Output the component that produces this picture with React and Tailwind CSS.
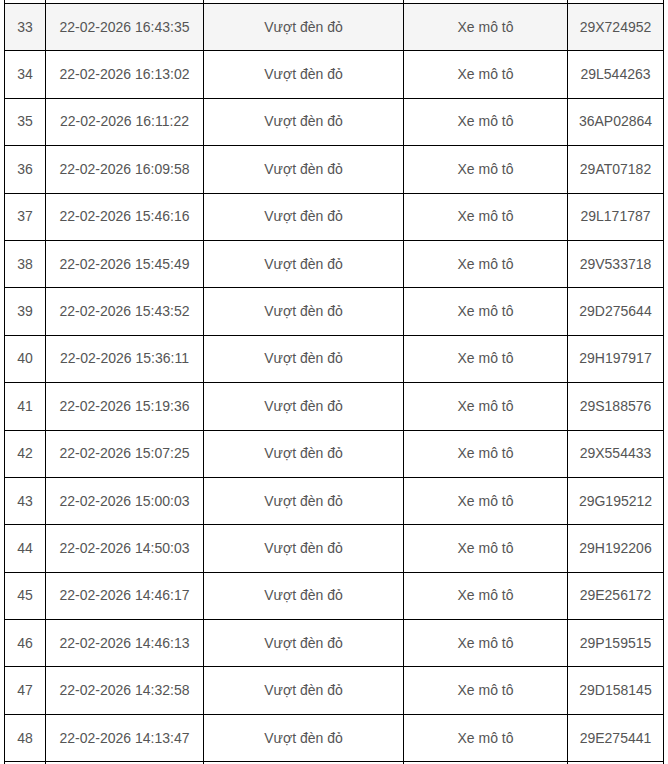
import React from 'react';

// rows 32 and 49 only show their borders at the edges of the window
const rows = [
  [32, null, null, true],
  [33, '22-02-2026 16:43:35', '29X724952'],
  [34, '22-02-2026 16:13:02', '29L544263'],
  [35, '22-02-2026 16:11:22', '36AP02864'],
  [36, '22-02-2026 16:09:58', '29AT07182'],
  [37, '22-02-2026 15:46:16', '29L171787'],
  [38, '22-02-2026 15:45:49', '29V533718'],
  [39, '22-02-2026 15:43:52', '29D275644'],
  [40, '22-02-2026 15:36:11', '29H197917'],
  [41, '22-02-2026 15:19:36', '29S188576'],
  [42, '22-02-2026 15:07:25', '29X554433'],
  [43, '22-02-2026 15:00:03', '29G195212'],
  [44, '22-02-2026 14:50:03', '29H192206'],
  [45, '22-02-2026 14:46:17', '29E256172'],
  [46, '22-02-2026 14:46:13', '29P159515'],
  [47, '22-02-2026 14:32:58', '29D158145'],
  [48, '22-02-2026 14:13:47', '29E275441'],
  [49, null, null, true],
];

const App = () => {
  return (
    <div className="h-[764px] w-[668px] overflow-hidden bg-white font-['Liberation_Sans',Arial,sans-serif] text-[14px] text-[#555]">
      <table className="ml-[4px] mt-[-44.4px] w-[659px] table-fixed border-collapse border border-black">
        <colgroup>
          <col className="w-[41px]" />
          <col className="w-[158px]" />
          <col className="w-[200px]" />
          <col className="w-[164px]" />
          <col className="w-[96px]" />
        </colgroup>
        <tbody>
          {rows.map(([stt, time, plate, blank]) => (
            <tr key={stt} className={stt === 33 ? 'bg-[#f5f5f5]' : 'bg-white'}>
              <td className="h-[47.4px] border border-black p-0 text-center">{blank ? '' : stt}</td>
              <td className="border border-black p-0 text-center">{time}</td>
              <td className="border border-black p-0 text-center">{blank ? '' : 'Vượt đèn đỏ'}</td>
              <td className="border border-black p-0 text-center">{blank ? '' : 'Xe mô tô'}</td>
              <td className="border border-black p-0 text-center">{plate}</td>
            </tr>
          ))}
        </tbody>
      </table>
    </div>
  );
};

export default App;
